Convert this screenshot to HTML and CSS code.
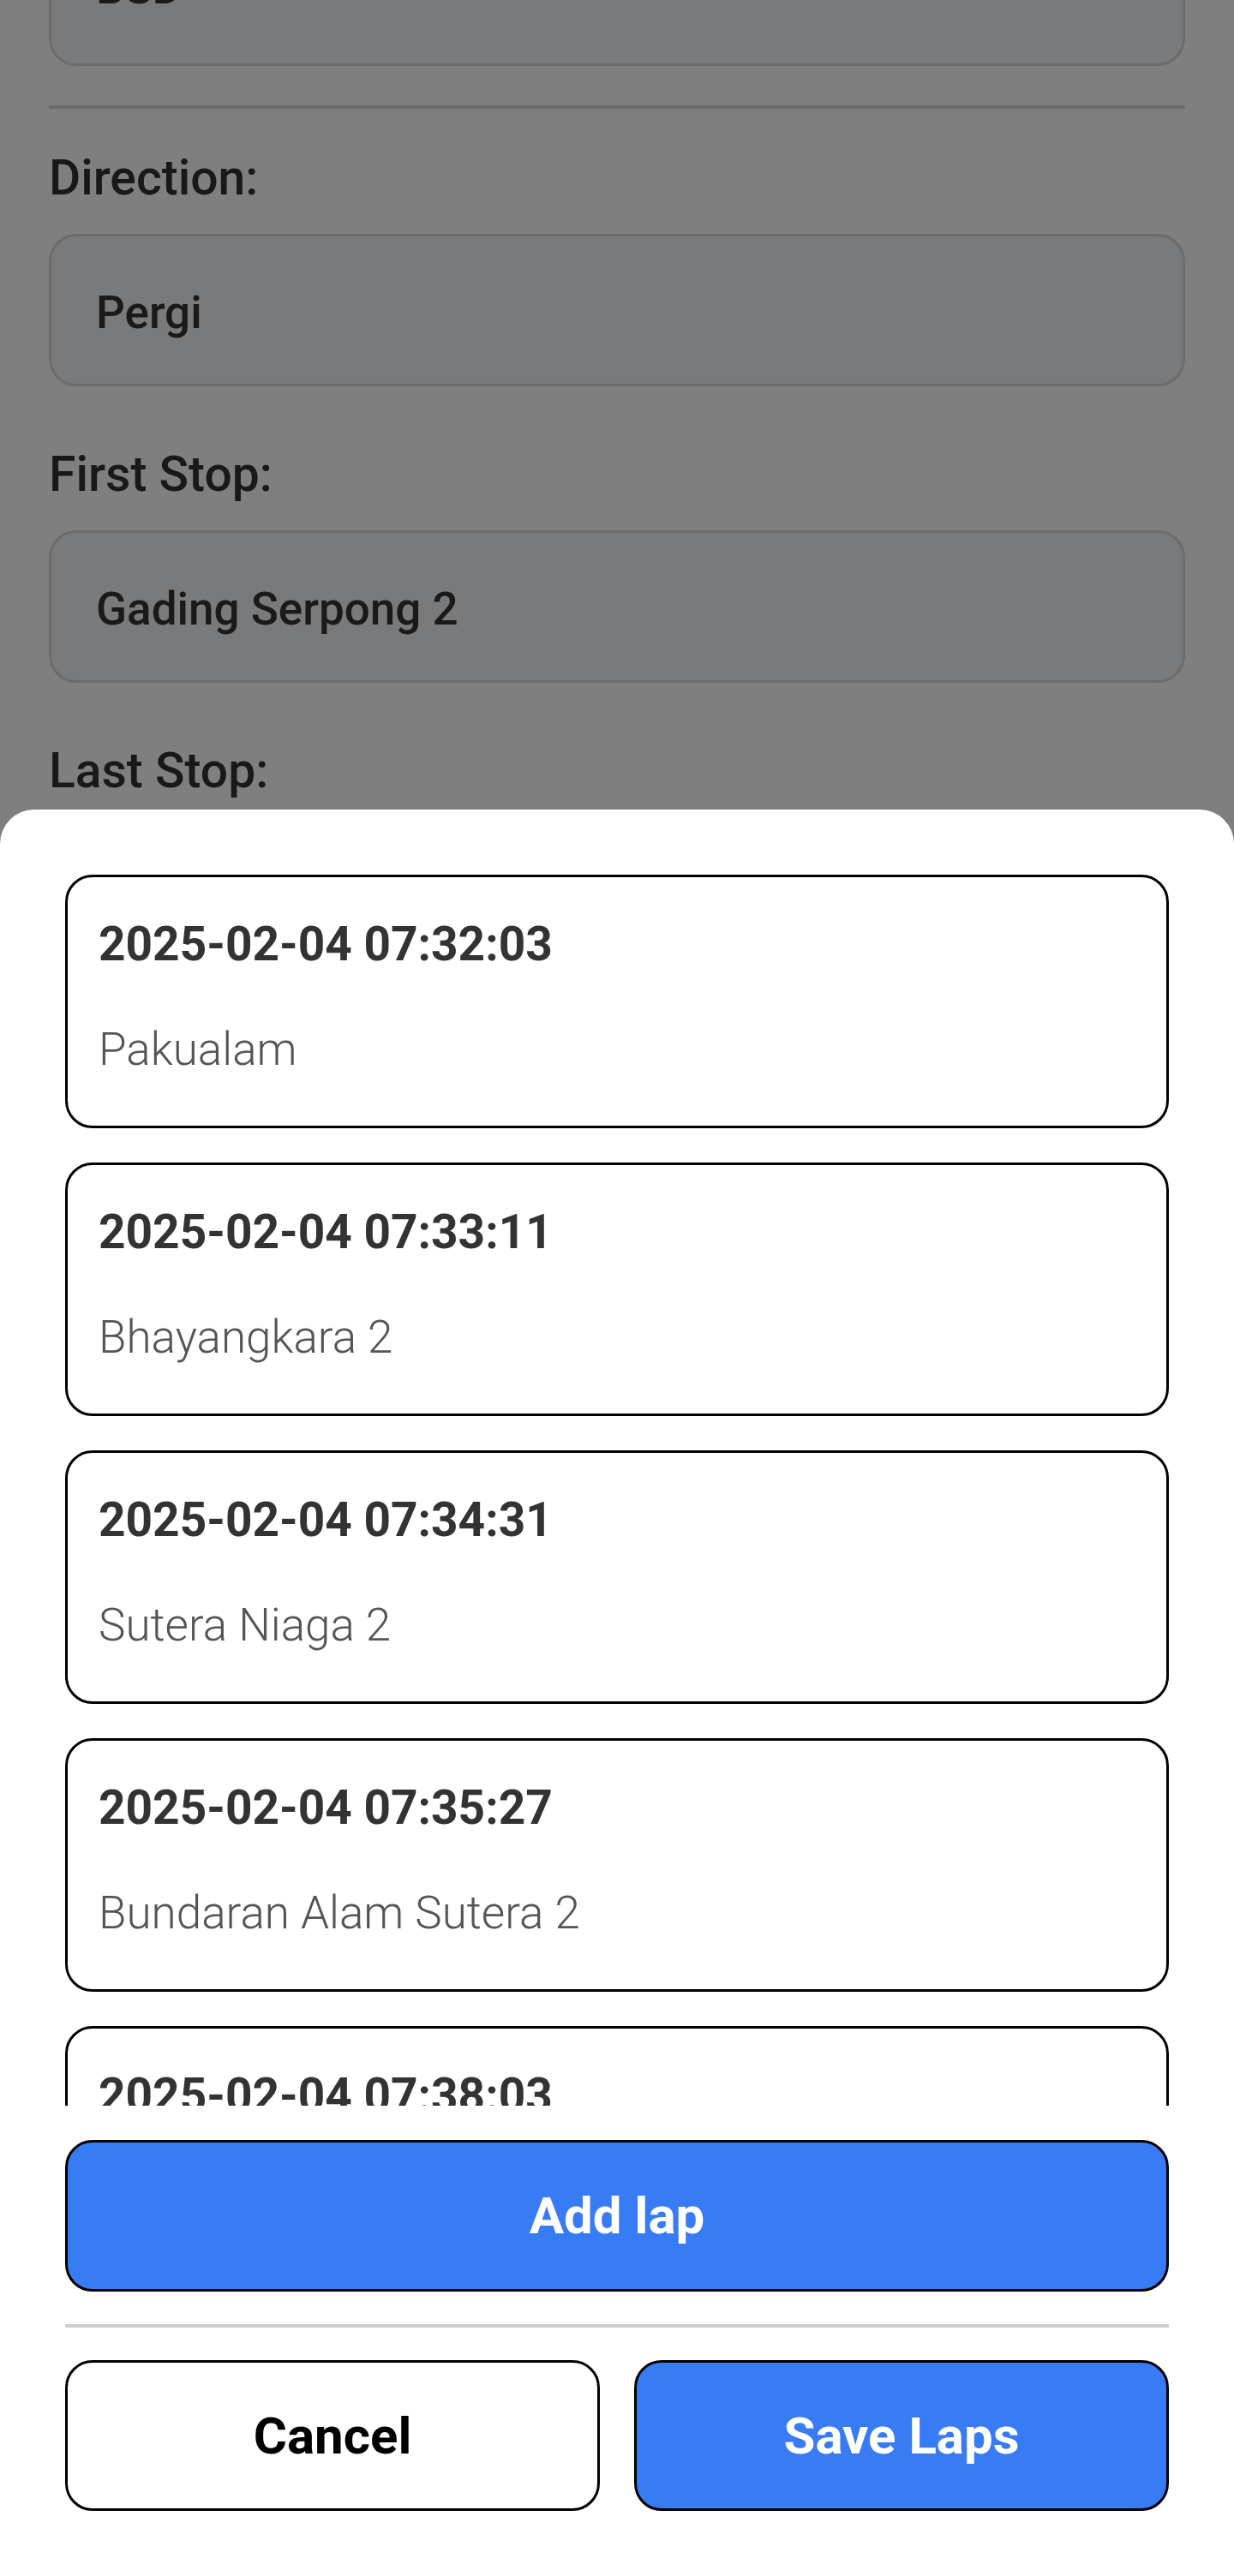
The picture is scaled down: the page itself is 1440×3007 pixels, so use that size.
FILE: index.html
```html
<!DOCTYPE html>
<html lang="en">
<head>
<meta charset="utf-8">
<title>Laps</title>
<link rel="stylesheet" href="styles.css">
</head>
<body>
<main class="form">
  <div class="field-box field-box--top"><span>BSD</span></div>
  <hr class="form-divider">
  <div class="field">
    <label class="field-label">Direction:</label>
    <div class="field-box"><span>Pergi</span></div>
  </div>
  <div class="field">
    <label class="field-label">First Stop:</label>
    <div class="field-box"><span>Gading Serpong 2</span></div>
  </div>
  <div class="field">
    <label class="field-label">Last Stop:</label>
    <div class="field-box"></div>
  </div>
</main>

<div class="backdrop"></div>

<section class="sheet">
  <div class="lap-list">
    <div class="lap-card">
      <div class="lap-time">2025-02-04 07:32:03</div>
      <div class="lap-stop">Pakualam</div>
    </div>
    <div class="lap-card">
      <div class="lap-time">2025-02-04 07:33:11</div>
      <div class="lap-stop">Bhayangkara 2</div>
    </div>
    <div class="lap-card">
      <div class="lap-time">2025-02-04 07:34:31</div>
      <div class="lap-stop">Sutera Niaga 2</div>
    </div>
    <div class="lap-card">
      <div class="lap-time">2025-02-04 07:35:27</div>
      <div class="lap-stop">Bundaran Alam Sutera 2</div>
    </div>
    <div class="lap-card">
      <div class="lap-time">2025-02-04 07:38:03</div>
      <div class="lap-stop">Alam Sutera 2</div>
    </div>
  </div>
  <button class="btn btn--primary btn--wide">Add lap</button>
  <hr class="sheet-divider">
  <div class="actions">
    <button class="btn btn--plain">Cancel</button>
    <button class="btn btn--primary">Save Laps</button>
  </div>
</section>
</body>
</html>
```

FILE: styles.css
```css
* { box-sizing: border-box; }

html, body {
  margin: 0;
  padding: 0;
}

body {
  width: 1440px;
  height: 3007px;
  overflow: hidden;
  position: relative;
  background: #ffffff;
  font-family: Roboto, "Noto Sans", "Liberation Sans", sans-serif;
  color: #333333;
}

/* ---------- background form ---------- */
.form {
  padding: 0 57px;
  display: flex;
  flex-direction: column;
}

.field-box {
  height: 178px;
  border: 3px solid #d6d8dc;
  background: #f2f4f8;
  border-radius: 32px;
  display: flex;
  align-items: center;
  padding: 5px 0 0 52px;
  font-size: 53px;
  font-weight: 500;
  color: #343434;
}

.field-box--top {
  height: 188px;
  margin-top: -111px;
}

.form-divider {
  margin: 46px 0 0;
  border: 0;
  height: 4px;
  background: #d7d7d7;
}

.field {
  display: flex;
  flex-direction: column;
  margin-top: 48px;
}

.field + .field {
  margin-top: 70px;
}

.field-label {
  font-size: 57px;
  line-height: 66px;
  font-weight: 500;
  color: #333333;
  margin-bottom: 32px;
}

.backdrop {
  position: fixed;
  inset: 0;
  background: rgba(0, 0, 0, 0.5);
}

/* ---------- bottom sheet ---------- */
.sheet {
  position: absolute;
  left: 0;
  right: 0;
  top: 945px;
  bottom: 0;
  background: #ffffff;
  border-radius: 40px 40px 0 0;
  padding: 76px 76px 76px;
  display: flex;
  flex-direction: column;
}

.lap-list {
  height: 1437px;
  overflow: hidden;
  display: flex;
  flex-direction: column;
  gap: 40px;
  flex-shrink: 0;
}

.lap-card {
  flex-shrink: 0;
  height: 296px;
  border: 3px solid #000000;
  border-radius: 32px;
  padding: 45px 36px 0;
}

.lap-time {
  font-size: 55px;
  line-height: 67px;
  font-weight: 700;
  color: #333333;
}

.lap-stop {
  margin-top: 59px;
  font-size: 53px;
  line-height: 60px;
  font-weight: 300;
  color: #555555;
}

.btn {
  font-family: Roboto, "Noto Sans", "Liberation Sans", sans-serif;
  font-size: 60px;
  font-weight: 700;
  height: 176px;
  border: 3px solid #000000;
  border-radius: 32px;
  cursor: pointer;
  padding: 0;
}

.btn--primary {
  background: #377bf5;
  color: #ffffff;
}

.btn--plain {
  background: #ffffff;
  color: #000000;
}

.btn--wide {
  margin-top: 40px;
  height: 177px;
  width: 100%;
  flex-shrink: 0;
}

.sheet-divider {
  margin: 38px 0 0;
  border: 0;
  height: 4px;
  background: #cccccc;
  flex-shrink: 0;
}

.actions {
  margin-top: 38px;
  display: flex;
  gap: 40px;
}

.actions .btn {
  flex: 1;
}
```
